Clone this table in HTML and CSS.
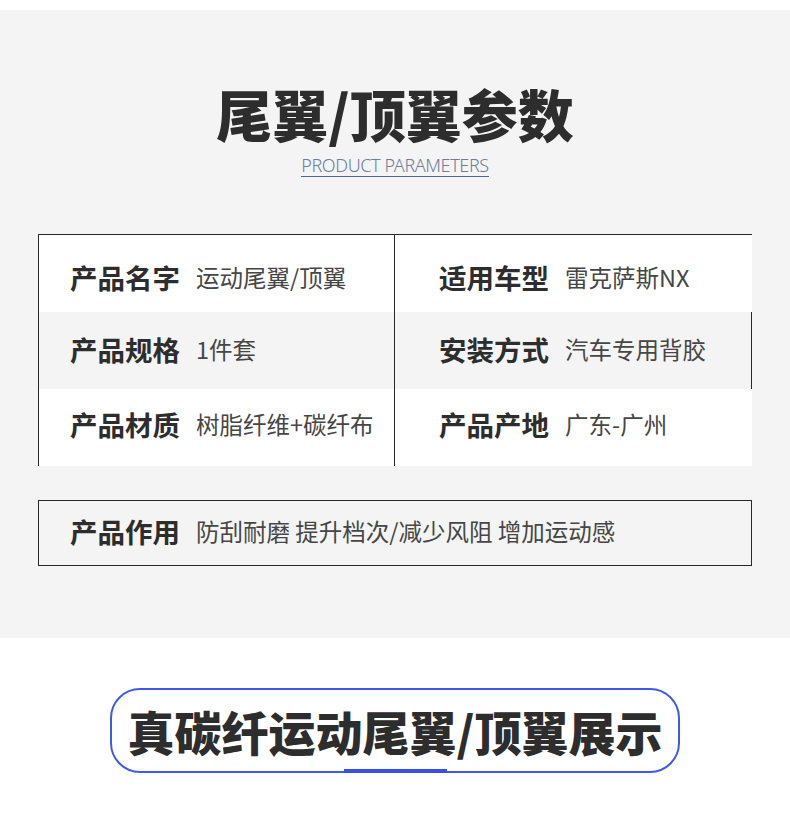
FILE: index.html
```html
<!DOCTYPE html>
<html lang="zh-CN">

<head>
    <meta charset="UTF-8" />
    <meta name="viewport" content="width=device-width, initial-scale=1.0" />
    <title>尾翼/顶翼参数</title>
    <link rel="stylesheet" href="styles.css">
</head>

<body class="page">

    <section class="params">
        <h1 class="params-title">尾翼/顶翼参数</h1>
        <p class="params-sub">PRODUCT PARAMETERS</p>

        <div class="spec-table">
            <div class="spec-row spec-row-first">
                <div class="spec-cell spec-left"><span class="spec-key">产品名字</span><span class="spec-val">运动尾翼/顶翼</span></div>
                <div class="spec-cell spec-right"><span class="spec-key">适用车型</span><span class="spec-val">雷克萨斯NX</span></div>
            </div>
            <div class="spec-row spec-row-alt">
                <div class="spec-cell spec-left"><span class="spec-key">产品规格</span><span class="spec-val">1件套</span></div>
                <div class="spec-cell spec-right"><span class="spec-key">安装方式</span><span class="spec-val">汽车专用背胶</span></div>
            </div>
            <div class="spec-row spec-row-last">
                <div class="spec-cell spec-left"><span class="spec-key">产品材质</span><span class="spec-val">树脂纤维+碳纤布</span></div>
                <div class="spec-cell spec-right"><span class="spec-key">产品产地</span><span class="spec-val">广东-广州</span></div>
            </div>
        </div>

        <div class="spec-use">
            <span class="spec-key">产品作用</span><span class="spec-val">防刮耐磨 提升档次/减少风阻 增加运动感</span>
        </div>
    </section>

    <section class="show">
        <div class="show-pill">
            <h2 class="show-title">真碳纤运动尾翼/顶翼展示</h2>
            <span class="show-bar"></span>
        </div>
    </section>

</body>

</html>
```

FILE: styles.css
```css
.page {
    margin: 0;
    background-color: rgb(255, 255, 255);
    font-family: "Noto Sans CJK SC", "Noto Sans", sans-serif;
    color: rgb(51, 51, 51);
}

.params {
    margin-top: 10px;
    height: 628px;
    background-color: rgb(244, 244, 244);
    padding-top: 1px;
    box-sizing: border-box;
    text-align: center;
}

.params-title {
    margin: 62px 0 0 0;
    font-size: 56px;
    font-weight: 900;
    line-height: 80px;
    color: rgb(45, 45, 45);
    white-space: nowrap;
}

.params-sub {
    display: inline-block;
    margin: 1px 0 0 0;
    padding-bottom: 0;
    border-bottom: 1px solid rgb(74, 104, 158);
    font-family: "Noto Sans", sans-serif;
    font-size: 18px;
    font-weight: 300;
    line-height: 22px;
    letter-spacing: -0.4px;
    color: rgb(110, 124, 156);
}

.spec-table {
    margin: 57px 38px 0 38px;
    border-top: 1px solid rgb(40, 40, 40);
    border-left: 1px solid rgb(40, 40, 40);
    text-align: left;
}

.spec-row {
    display: flex;
    height: 77px;
    background-color: rgb(255, 255, 255);
}

.spec-row-alt {
    background-color: rgb(244, 244, 244);
    border-right: 1px solid rgb(40, 40, 40);
}

.spec-cell {
    display: flex;
    align-items: center;
    padding-bottom: 3px;
    box-sizing: border-box;
}

.spec-row-first .spec-cell {
    padding-top: 7px;
    padding-bottom: 0;
}

.spec-row-last .spec-cell {
    padding-bottom: 8px;
}

.spec-left {
    width: 356px;
    padding-left: 31px;
    border-right: 1px solid rgb(40, 40, 40);
}

.spec-right {
    flex: 1;
    padding-left: 44px;
}

.spec-key {
    font-size: 27.5px;
    font-weight: 700;
    color: rgb(45, 45, 45);
    margin-right: 16px;
    white-space: nowrap;
}

.spec-val {
    font-size: 23.5px;
    font-weight: 400;
    color: rgb(70, 70, 70);
    white-space: nowrap;
}

.spec-use {
    display: flex;
    align-items: center;
    margin: 34px 38px 0 38px;
    height: 66px;
    box-sizing: border-box;
    padding-left: 31px;
    padding-bottom: 5px;
    border: 1px solid rgb(40, 40, 40);
    text-align: left;
}

.show {
    padding-top: 50px;
    display: flex;
    justify-content: center;
}

.show-pill {
    position: relative;
    width: 570px;
    height: 85px;
    box-sizing: border-box;
    border: 2px solid rgb(64, 90, 230);
    border-radius: 30px;
    display: flex;
    align-items: center;
    justify-content: center;
}

.show-title {
    margin: 0;
    font-size: 47px;
    font-weight: 900;
    line-height: 60px;
    color: rgb(45, 45, 45);
    white-space: nowrap;
}

.show-bar {
    position: absolute;
    left: 232px;
    bottom: -6px;
    width: 103px;
    height: 8px;
    background-color: rgb(58, 80, 224);
}
```
